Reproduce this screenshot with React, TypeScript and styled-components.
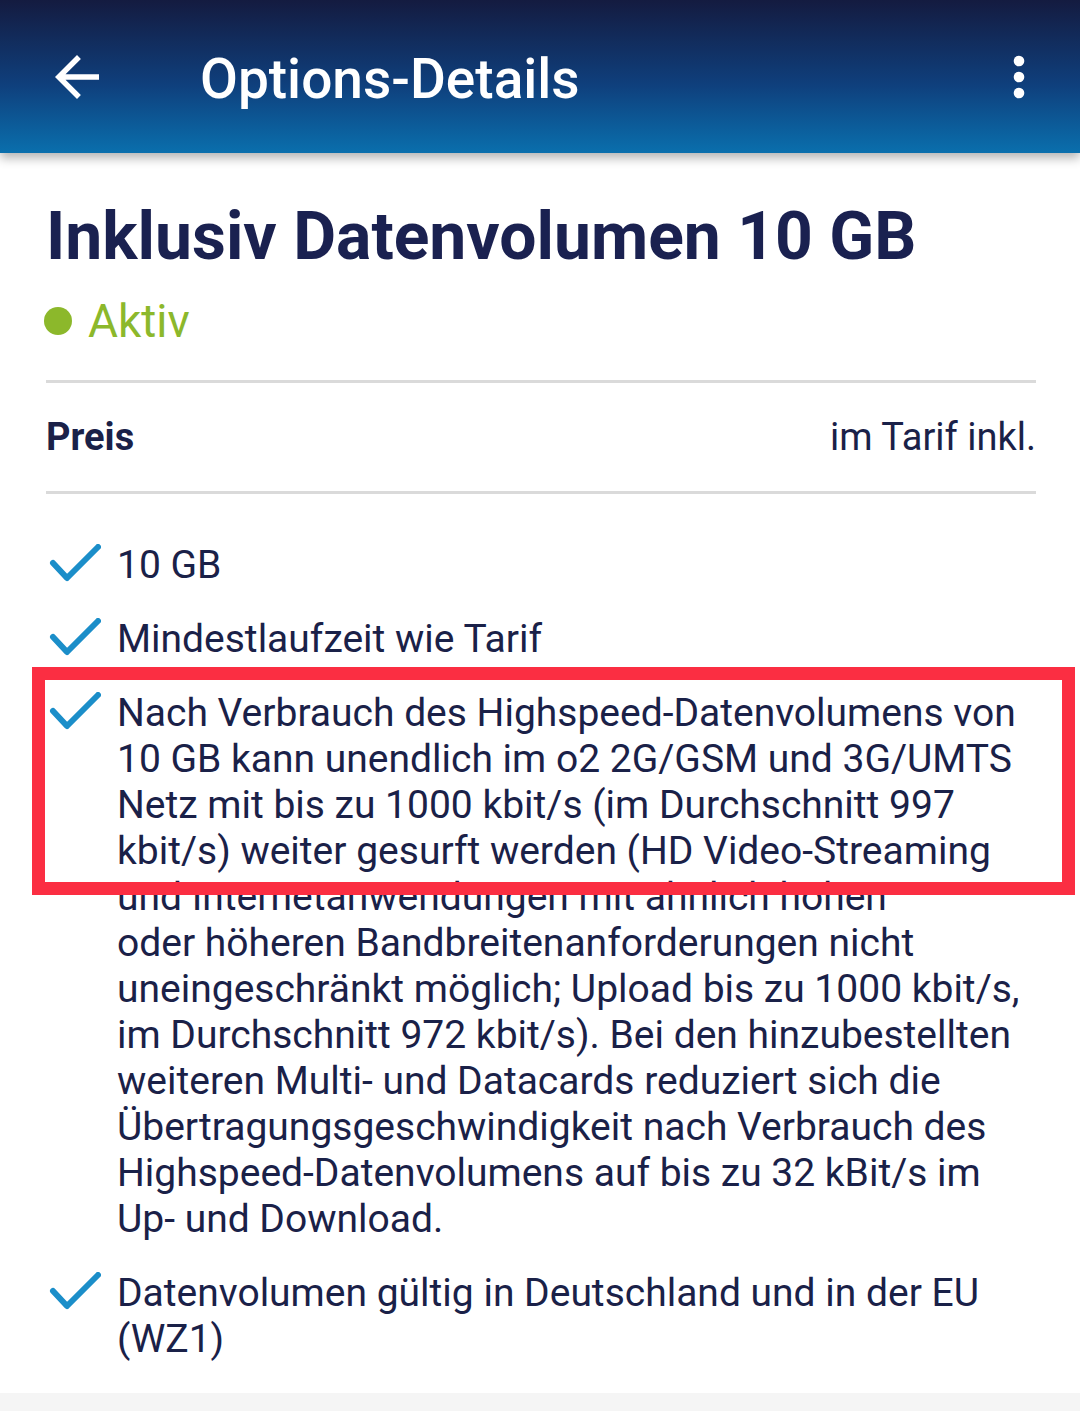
import React from 'react';
import styled, { createGlobalStyle } from 'styled-components';

const GlobalStyle = createGlobalStyle`
  html, body {
    margin: 0;
    padding: 0;
    background: #ffffff;
    font-family: Roboto, "Noto Sans", "Liberation Sans", sans-serif;
  }
`

// "oder höheren" is kept together with a no-break space, as in the app
const features = [
  '10 GB',
  'Mindestlaufzeit wie Tarif',
  'Nach Verbrauch des Highspeed-Datenvolumens von 10 GB kann unendlich im o2 2G/GSM und 3G/UMTS Netz mit bis zu 1000 kbit/s (im Durchschnitt 997 kbit/s) weiter gesurft werden (HD Video-Streaming und Internetanwendungen mit ähnlich hohen oder\u00a0höheren Bandbreitenanforderungen nicht uneingeschränkt möglich; Upload bis zu 1000 kbit/s, im Durchschnitt 972 kbit/s). Bei den hinzubestellten weiteren Multi- und Datacards reduziert sich die Übertragungsgeschwindigkeit nach Verbrauch des Highspeed-Datenvolumens auf bis zu 32 kBit/s im Up- und Download.',
  'Datenvolumen gültig in Deutschland und in der EU (WZ1)',
]

function BackIcon() {
  return (
    <svg width="66" height="66" viewBox="0 0 24 24" fill="#ffffff">
      <path d="M20 11H7.83l5.59-5.59L12 4l-8 8 8 8 1.41-1.41L7.83 13H20v-2z" />
    </svg>
  )
}

function MoreIcon() {
  return (
    <svg width="64" height="64" viewBox="0 0 24 24" fill="#ffffff">
      <circle cx="12" cy="6" r="2" />
      <circle cx="12" cy="12" r="2" />
      <circle cx="12" cy="18" r="2" />
    </svg>
  )
}

function CheckIcon() {
  return (
    <CheckSvg width="52" height="38" viewBox="0 0 52 38">
      <polyline points="4,19 18,34 49,3" fill="none" stroke="#1b8ec9" strokeWidth="6" strokeLinecap="round" strokeLinejoin="round" />
    </CheckSvg>
  )
}

function App() {
  return (
    <Page>
      <GlobalStyle />
      <Header>
        <BackIcon />
        <HeaderTitle>Options-Details</HeaderTitle>
        <MoreIcon />
      </Header>
      <Content>
        <Title>Inklusiv Datenvolumen 10 GB</Title>
        <Status>
          <Dot />
          Aktiv
        </Status>
        <Divider />
        <PriceRow>
          <PriceLabel>Preis</PriceLabel>
          <PriceValue>im Tarif inkl.</PriceValue>
        </PriceRow>
        <Divider />
        <FeatureList>
          {features.map((f) => (
            <Feature key={f}>
              <CheckIcon />
              <FeatureText>{f}</FeatureText>
            </Feature>
          ))}
        </FeatureList>
      </Content>
      <BottomBar />
      <Highlight />
    </Page>
  )
}

const Page = styled.div`
  position: relative;
  min-height: 1411px;
  display: flex;
  flex-direction: column;
  overflow: hidden;
`

const Header = styled.header`
  height: 153px;
  box-sizing: border-box;
  padding: 4px 29px 0 44px;
  display: flex;
  align-items: center;
  gap: 90px;
  background: linear-gradient(180deg, #141b40 0%, #0f3f7c 55%, #0a6fad 100%);
  box-shadow: 0 5px 10px rgba(0, 0, 0, 0.3);
  position: relative;
  z-index: 1;
  svg:first-child {
    margin-top: -4px;
  }
  svg:last-child {
    margin: -4px 0 0 auto;
  }
`

const HeaderTitle = styled.h1`
  margin: 0;
  color: #ffffff;
  font-size: 55px;
  font-weight: 500;
`

const Content = styled.main`
  flex: 1;
  padding: 0 44px 0 46px;
  display: flex;
  flex-direction: column;
`

const Title = styled.h2`
  margin: 44px 0 0;
  color: #1a2150;
  font-size: 66px;
  font-weight: 700;
  line-height: 80px;
`

const Status = styled.div`
  display: flex;
  align-items: center;
  gap: 16px;
  margin: 16px 0 31px -2px;
  color: #8cb82b;
  font-size: 46px;
  line-height: 56px;
`

const Dot = styled.span`
  width: 28px;
  height: 28px;
  border-radius: 50%;
  background: #8cb82b;
`

const Divider = styled.hr`
  margin: 0;
  border: none;
  height: 3px;
  background: #dadada;
`

const PriceRow = styled.div`
  display: flex;
  align-items: center;
  justify-content: space-between;
  height: 108px;
  color: #1a2148;
  font-size: 38px;
`

const PriceLabel = styled.span`
  font-weight: 700;
`

const PriceValue = styled.span`
  font-weight: 400;
`

const FeatureList = styled.ul`
  list-style: none;
  margin: 48px 0 0;
  padding: 0;
  display: flex;
  flex-direction: column;
  gap: 28px;
`

const Feature = styled.li`
  display: flex;
  align-items: flex-start;
  gap: 16px;
`

const CheckSvg = styled.svg`
  flex-shrink: 0;
  margin: 2px 0 0 3px;
`

const FeatureText = styled.span`
  color: #1a2148;
  font-size: 39px;
  line-height: 46px;
`

const BottomBar = styled.div`
  height: 18px;
  background: #f5f5f5;
`

const Highlight = styled.div`
  position: absolute;
  top: 667px;
  left: 32px;
  width: 1043px;
  height: 228px;
  box-sizing: border-box;
  border: 13px solid #fb2e42;
  pointer-events: none;
`

export default App;
